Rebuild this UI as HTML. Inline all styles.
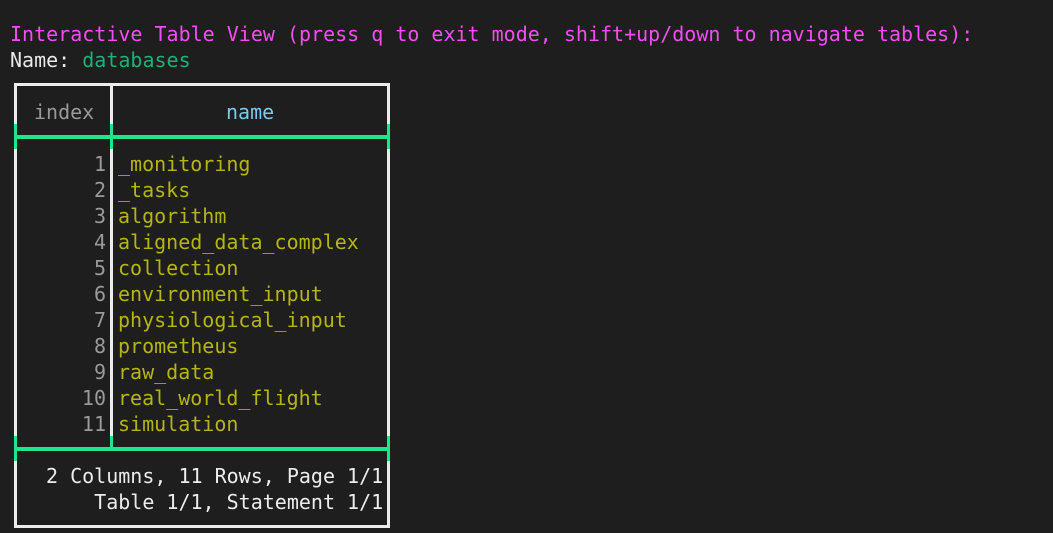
<!DOCTYPE html>
<html><head><style>
body{margin:0;width:1053px;height:533px;background:#1e1e1e;overflow:hidden;position:relative;font-family:"DejaVu Sans Mono","Liberation Mono",monospace;font-size:20px;}
.t{position:absolute;white-space:pre;line-height:26px;}
.b{position:absolute;}
</style></head><body>
<div class="t" style="left:10px;top:21px;color:#f24df2">Interactive Table View (press q to exit mode, shift+up/down to navigate tables):</div>
<div class="t" style="left:10px;top:47px;color:#e8e8e8">Name: <span style="color:#1fb07a">databases</span></div>

<div class="b" style="left:14px;top:83px;width:370px;height:439px;border:3px solid #ececec;"></div>
<div class="b" style="left:110px;top:86px;width:3px;height:362px;background:#ececec;"></div>
<div class="b" style="left:14px;top:135px;width:376px;height:4px;background:#1ee68c;"></div>
<div class="b" style="left:14px;top:124px;width:3px;height:25px;background:#1ee68c;"></div>
<div class="b" style="left:387px;top:124px;width:3px;height:25px;background:#1ee68c;"></div>
<div class="b" style="left:110px;top:124px;width:3px;height:25px;background:#1ee68c;"></div>
<div class="b" style="left:14px;top:447px;width:376px;height:4px;background:#1ee68c;"></div>
<div class="b" style="left:14px;top:436px;width:3px;height:25px;background:#1ee68c;"></div>
<div class="b" style="left:387px;top:436px;width:3px;height:25px;background:#1ee68c;"></div>
<div class="b" style="left:110px;top:436px;width:3px;height:15px;background:#1ee68c;"></div>

<div class="t" style="left:34px;top:99px;color:#9a9a9a">index</div>
<div class="t" style="left:226px;top:99px;color:#7cc8ee">name</div>

<div class="t" style="left:58px;top:151px;width:48px;text-align:right;color:#9a9a9a">1
2
3
4
5
6
7
8
9
10
11</div>
<div class="t" style="left:118px;top:151px;color:#b5b514">_monitoring
_tasks
algorithm
aligned_data_complex
collection
environment_input
physiological_input
prometheus
raw_data
real_world_flight
simulation</div>

<div class="t" style="left:46px;top:463px;color:#ececec">2 Columns, 11 Rows, Page 1/1
    Table 1/1, Statement 1/1</div>
</body></html>
